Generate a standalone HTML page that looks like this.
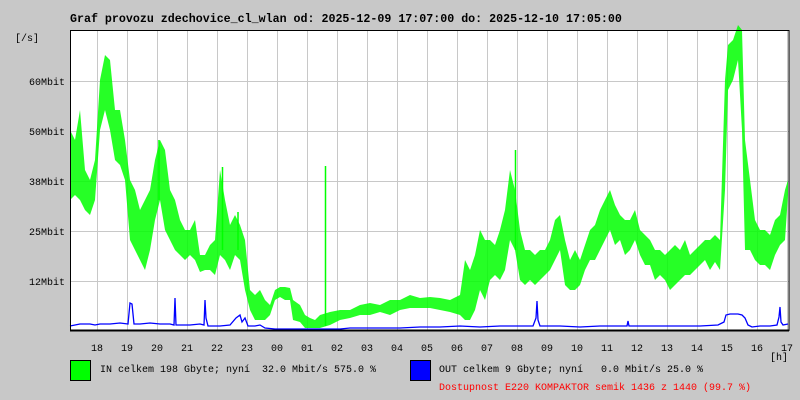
<!DOCTYPE html>
<html><head><meta charset="utf-8"><style>
html,body{margin:0;padding:0;background:#c8c8c8;}
svg{display:block}
text{font-family:"Liberation Mono",monospace;white-space:pre;}
</style></head><body>
<svg width="800" height="400" viewBox="0 0 800 400" xmlns="http://www.w3.org/2000/svg">
<rect width="800" height="400" fill="#c8c8c8"/>
<text x="70" y="22" font-size="11.65" font-weight="bold" fill="#000">Graf provozu zdechovice_cl_wlan od: 2025-12-09 17:07:00 do: 2025-12-10 17:05:00</text>
<rect x="70" y="30" width="719" height="300" fill="#fff"/>
<g stroke="#c8c8c8" stroke-width="1">
<path d="M70.5 81.5H789M70.5 131.5H789M70.5 181.5H789M70.5 231.5H789M70.5 281.5H789"/>
<path d="M97.5 30V330M127.5 30V330M157.5 30V330M187.5 30V330M217.5 30V330M247.5 30V330M277.5 30V330M307.5 30V330M337.5 30V330M367.5 30V330M397.5 30V330M427.5 30V330M457.5 30V330M487.5 30V330M517.5 30V330M547.5 30V330M577.5 30V330M607.5 30V330M637.5 30V330M667.5 30V330M697.5 30V330M727.5 30V330M757.5 30V330M787.5 30V330"/>
</g>
<polygon fill="#00ff00" fill-opacity="0.85" points="70,130 75,140 80,110 85,170 90,180 95,160 100,80 105,55 110,60 115,110 120,110 125,140 130,180 135,190 140,210 145,200 150,190 155,160 160,140 165,150 170,190 175,200 180,220 185,230 190,230 195,220 200,255 205,255 210,245 215,240 220,170 225,200 230,225 235,215 240,225 245,240 250,290 255,295 260,290 265,300 270,305 275,290 280,287 285,287 290,288 293,300 300,305 305,315 310,318 315,320 320,315 330,312 340,310 350,310 360,305 370,303 380,305 390,300 400,300 410,295 420,298 430,297 440,298 450,300 460,295 465,260 470,270 475,255 480,230 485,240 490,240 495,245 500,230 505,210 510,170 515,190 520,230 525,250 530,250 535,255 540,250 545,250 550,240 555,220 560,215 565,240 570,260 575,250 580,260 585,245 590,230 595,225 600,210 605,200 610,190 615,205 620,215 625,220 630,220 635,210 640,230 645,235 650,240 655,250 660,250 665,255 670,250 675,245 680,250 685,240 690,255 695,250 700,245 705,240 710,240 715,235 720,240 725,80 728,45 733,40 738,25 742,30 745,140 750,180 755,220 760,230 765,230 770,235 775,220 780,215 785,190 788,180 788,195 785,240 780,245 775,255 770,270 765,265 760,265 755,260 750,250 745,250 742,130 738,60 733,80 728,90 725,190 720,270 715,262 710,270 705,260 700,265 695,270 690,275 685,275 680,280 675,285 670,290 665,280 660,275 655,280 650,265 645,265 640,255 635,240 630,250 625,255 620,240 615,245 610,230 605,240 600,250 595,260 590,260 585,270 580,285 575,290 570,290 565,285 560,250 555,260 550,270 545,275 540,280 535,285 530,280 525,285 520,280 515,250 510,240 505,270 500,280 495,275 490,280 485,300 480,290 475,310 470,320 465,320 460,315 450,312 440,310 430,308 420,308 410,308 400,310 390,315 380,312 370,315 360,315 350,318 340,320 330,325 320,328 315,328 310,328 305,328 300,322 293,320 290,300 285,300 280,297 275,300 270,315 265,320 260,320 255,320 250,310 245,290 240,260 235,255 230,270 225,260 220,255 215,275 210,270 205,270 200,272 195,260 190,255 185,260 180,255 175,250 170,240 165,230 160,200 155,220 150,250 145,270 140,260 135,250 130,240 125,180 120,165 115,160 110,130 105,110 100,130 95,200 90,215 85,210 80,200 75,195 70,200"/>
<g stroke="#00ff00" stroke-width="1.5" fill="none">
<path d="M325.5 166V326M515.5 150V250M222.5 167V250M238 212V250M159 140V200"/>
</g>
<polyline fill="none" stroke="#0000ff" stroke-width="1.3" points="70,326 80,324 90,324 95,325 100,324 110,324 120,323 128,324 130,303 132,304 134,324 140,324 150,323 160,324 170,324 174,325 175,298 176,325 180,325 190,325 200,324 204,325 205,300 206,318 208,326 220,326 230,325 236,318 240,315 242,322 245,318 248,326 255,326 260,325 265,328 275,329 305,329 340,329 350,328 400,328 420,327 440,327 460,326 480,327 500,326 520,326 533,326 536,318 537,301 538,320 540,326 560,326 580,327 600,326 620,326 627,326 628,321 629,326 660,326 680,326 700,326 718,325 724,322 726,315 730,314 738,314 742,315 745,318 748,325 752,327 760,326 770,326 777,325 779,317 780,307 781,322 783,325 788,324"/>
<rect x="70.5" y="30.5" width="718.5" height="300" fill="none" stroke="#000" stroke-width="1"/>
<line x1="70" y1="330.5" x2="789" y2="330.5" stroke="#000" stroke-width="2"/>
<g font-size="10" fill="#000" text-anchor="end">
<text x="39" y="41">[/s]</text>
<text x="65" y="85">60Mbit</text>
<text x="65" y="135">50Mbit</text>
<text x="65" y="185">38Mbit</text>
<text x="65" y="235">25Mbit</text>
<text x="65" y="285">12Mbit</text>
</g>
<g font-size="10" fill="#000" text-anchor="middle">
<text x="97" y="351">18</text><text x="127" y="351">19</text><text x="157" y="351">20</text><text x="187" y="351">21</text><text x="217" y="351">22</text><text x="247" y="351">23</text><text x="277" y="351">00</text><text x="307" y="351">01</text><text x="337" y="351">02</text><text x="367" y="351">03</text><text x="397" y="351">04</text><text x="427" y="351">05</text><text x="457" y="351">06</text><text x="487" y="351">07</text><text x="517" y="351">08</text><text x="547" y="351">09</text><text x="577" y="351">10</text><text x="607" y="351">11</text><text x="637" y="351">12</text><text x="667" y="351">13</text><text x="697" y="351">14</text><text x="727" y="351">15</text><text x="757" y="351">16</text><text x="787" y="351">17</text>
<text x="779" y="360">[h]</text>
</g>
<rect x="70.5" y="360.5" width="20" height="20" fill="#00ff00" stroke="#000"/>
<rect x="410.5" y="360.5" width="20" height="20" fill="#0000ff" stroke="#000"/>
<g font-size="10">
<text x="100" y="372" fill="#000">IN celkem 198 Gbyte; nyní  32.0 Mbit/s 575.0 %</text>
<text x="439" y="372" fill="#000">OUT celkem 9 Gbyte; nyní   0.0 Mbit/s 25.0 %</text>
<text x="439" y="390" fill="#ff0000">Dostupnost E220 KOMPAKTOR semik 1436 z 1440 (99.7 %)</text>
</g>
</svg>
</body></html>
